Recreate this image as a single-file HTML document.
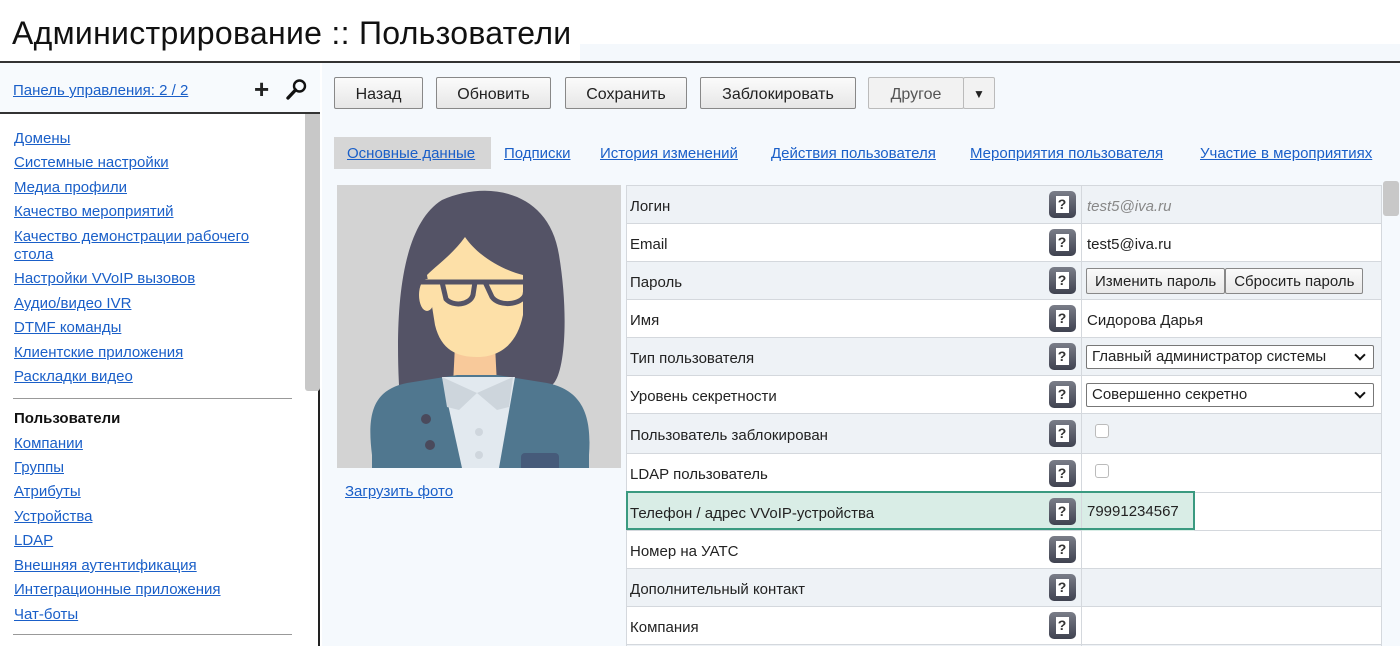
<!DOCTYPE html>
<html style="overflow:hidden;height:646px"><head><meta charset="utf-8"><style>
*{margin:0;padding:0;box-sizing:border-box}
body{width:1400px;height:646px;overflow:hidden;background:#fff;font-family:"Liberation Sans",sans-serif;position:relative;color:#222}
a{color:#1a5fc8;text-decoration:underline}
.abs{position:absolute}
#title{left:12px;top:15px;font-size:32px;color:#111;letter-spacing:0.3px}
#topline{left:0;top:61px;width:1400px;height:2px;background:#333}
#strip{left:580px;top:44px;width:820px;height:17px;background:#f4f8fc}
#side{left:0;top:63px;width:320px;height:583px;background:#fff;border-right:2px solid #222}
#sidehead{left:0;top:63px;width:320px;height:51px;border-bottom:2px solid #333;background:#f7fafd}
.sl{position:absolute;left:14px;font-size:15px;white-space:nowrap}
#main{left:322px;top:63px;width:1078px;height:583px;background:#f5f9fd}
.btn{position:absolute;top:77px;height:32px;border:1px solid #888;border-radius:2px;background:linear-gradient(#fbfbfb,#e6e6e6);font-size:16px;text-align:center;line-height:33px;color:#222}
.tab{position:absolute;top:145px;font-size:15px}
#wrap{position:absolute;left:626px;top:185px;width:756px;height:461px;overflow:hidden}
table{width:756px;border-collapse:collapse;font-size:15px}
td{border:1px solid #d4d8dd;height:38px;padding-left:3px;padding-top:3px}
tr:nth-child(odd) td{background:#eef2f6}
tr:nth-child(even) td{background:#fff}
td.q{width:40px;border-left:none;border-right:1px solid #d4d8dd;text-align:left;padding:0}
td.l{border-right:none}
.qi{display:inline-block;width:27px;height:27px;border-radius:5px;background:linear-gradient(#7a7d88,#3f4250);position:relative;vertical-align:middle;margin-left:7px}
.qi:after{content:"?";position:absolute;left:7px;top:5px;width:13px;height:17px;background:#fff;color:#333;font-size:14px;font-weight:bold;line-height:17px;text-align:center}
td.v{width:300px;padding-left:5px}
.sel{display:block;width:288px;height:24px;border:1px solid #777;border-radius:2px;background:#fff;font-size:15px;line-height:22px;padding-left:5px;position:relative}
.sel:after{content:"";position:absolute;right:9px;top:5px;width:6px;height:6px;border-right:2px solid #111;border-bottom:2px solid #111;transform:rotate(45deg)}
.pb{display:inline-block;height:26px;border:1px solid #888;border-radius:2px;background:linear-gradient(#fafafa,#e8e8e8);font-size:15px;line-height:25px;padding:0 8px}
.cb{display:inline-block;width:14px;height:14px;border:1px solid #bbb;border-radius:3px;background:#fff;margin-left:8px;vertical-align:middle}
</style></head><body>
<div class="abs" id="strip"></div>
<div class="abs" id="title">Администрирование :: Пользователи</div>
<div class="abs" id="topline"></div>
<div class="abs" id="side"></div>
<div class="abs" id="sidehead"></div>
<a class="sl" style="top:82px;left:13px">Панель управления: 2 / 2</a>
<div class="abs" style="left:254px;top:80px;font-size:26px;font-weight:bold;line-height:18px">+</div>
<svg class="abs" style="left:286px;top:78px" width="22" height="22" viewBox="0 0 22 22"><circle cx="13.5" cy="8" r="5.5" fill="none" stroke="#111" stroke-width="2.4"/><line x1="9.5" y1="12" x2="2" y2="20" stroke="#111" stroke-width="3.4" stroke-linecap="round"/></svg>
<div class="abs" style="left:305px;top:114px;width:15px;height:277px;background:#c8c8c8;border-radius:0 0 3px 3px"></div>
<a class="sl" style="top:130px">Домены</a>
<a class="sl" style="top:154px">Системные настройки</a>
<a class="sl" style="top:179px">Медиа профили</a>
<a class="sl" style="top:203px">Качество мероприятий</a>
<a class="sl" style="top:228px">Качество демонстрации рабочего</a>
<a class="sl" style="top:246px">стола</a>
<a class="sl" style="top:270px">Настройки VVoIP вызовов</a>
<a class="sl" style="top:295px">Аудио/видео IVR</a>
<a class="sl" style="top:319px">DTMF команды</a>
<a class="sl" style="top:344px">Клиентские приложения</a>
<a class="sl" style="top:368px">Раскладки видео</a>
<div class="abs" style="left:13px;top:398px;width:279px;height:1px;background:#999"></div>
<div class="sl" style="top:410px;font-weight:bold;color:#111">Пользователи</div>
<a class="sl" style="top:435px">Компании</a>
<a class="sl" style="top:459px">Группы</a>
<a class="sl" style="top:483px">Атрибуты</a>
<a class="sl" style="top:508px">Устройства</a>
<a class="sl" style="top:532px">LDAP</a>
<a class="sl" style="top:557px">Внешняя аутентификация</a>
<a class="sl" style="top:581px">Интеграционные приложения</a>
<a class="sl" style="top:606px">Чат-боты</a>
<div class="abs" style="left:13px;top:634px;width:279px;height:1px;background:#999"></div>

<div class="abs" id="main"></div>
<div class="btn" style="left:334px;width:89px">Назад</div>
<div class="btn" style="left:436px;width:115px">Обновить</div>
<div class="btn" style="left:565px;width:122px">Сохранить</div>
<div class="btn" style="left:700px;width:156px">Заблокировать</div>
<div class="btn" style="left:868px;width:96px;border-color:#bbb;color:#555;background:#f2f2f2">Другое</div>
<div class="btn" style="left:963px;width:32px;border-color:#bbb;background:#f2f2f2;font-size:12px">▼</div>
<div class="abs" style="left:334px;top:137px;width:157px;height:32px;background:#d6d6d6"></div>
<a class="tab" style="left:347px">Основные данные</a>
<a class="tab" style="left:504px">Подписки</a>
<a class="tab" style="left:600px">История изменений</a>
<a class="tab" style="left:771px">Действия пользователя</a>
<a class="tab" style="left:970px">Мероприятия пользователя</a>
<a class="tab" style="left:1200px">Участие в мероприятиях</a>

<svg class="abs" style="left:337px;top:185px" width="284" height="283" viewBox="0 0 284 283">
<rect width="284" height="283" fill="#d3d3d3"/>
<path d="M62 200 C58 120 65 40 105 15 C150 -5 212 5 222 70 C232 130 228 190 215 200 Z" fill="#545366"/>
<path d="M118 160 L158 160 L160 200 L116 200 Z" fill="#f8c99a"/>
<path d="M98 140 C104 165 120 172 140 172 C162 172 180 160 186 130 L186 90 C165 85 140 70 128 52 C115 70 100 80 90 90 Z" fill="#fde0a8"/>
<ellipse cx="90" cy="110" rx="8" ry="16" fill="#fde0a8"/>
<path d="M35 270 C30 230 35 205 70 198 L120 190 L160 190 L210 198 C245 205 255 230 252 270 L252 283 L35 283 Z" fill="#50778f"/>
<path d="M105 192 L178 192 L162 283 L125 283 Z" fill="#e2e9ef"/>
<path d="M105 192 L140 208 L176 192 L172 222 L160 225 L140 208 L122 225 L110 222 Z" fill="#cdd5dc"/>
<circle cx="89" cy="234" r="5" fill="#4a4a5c"/><circle cx="93" cy="260" r="5" fill="#4a4a5c"/>
<circle cx="142" cy="247" r="4" fill="#cfd6dd"/><circle cx="142" cy="270" r="4" fill="#cfd6dd"/>
<rect x="184" y="268" width="38" height="18" rx="4" fill="#465b7a"/>
<path d="M84 97 L196 97" stroke="#545366" stroke-width="5"/>
<path d="M105 97 L138 97 L136 110 C133 120 116 122 109 114 Z" fill="none" stroke="#545366" stroke-width="5" stroke-linejoin="round"/>
<path d="M148 97 L190 97 L188 110 C184 120 162 122 155 112 Z" fill="none" stroke="#545366" stroke-width="5" stroke-linejoin="round"/>
</svg>
<a class="abs" style="left:345px;top:483px;font-size:15px">Загрузить фото</a>

<div id="wrap"><table>
<tr><td class="l">Логин</td><td class="q"><span class="qi"></span></td><td class="v" style="color:#888;font-style:italic">test5@iva.ru</td></tr>
<tr><td class="l">Email</td><td class="q"><span class="qi"></span></td><td class="v">test5@iva.ru</td></tr>
<tr><td class="l">Пароль</td><td class="q"><span class="qi"></span></td><td class="v" style="padding-left:4px;padding-top:0"><span class="pb">Изменить пароль</span><span class="pb">Сбросить пароль</span></td></tr>
<tr><td class="l">Имя</td><td class="q"><span class="qi"></span></td><td class="v">Сидорова Дарья</td></tr>
<tr><td class="l">Тип пользователя</td><td class="q"><span class="qi"></span></td><td class="v" style="padding-left:4px;padding-top:0"><span class="sel">Главный администратор системы</span></td></tr>
<tr><td class="l">Уровень секретности</td><td class="q"><span class="qi"></span></td><td class="v" style="padding-left:4px;padding-top:0"><span class="sel">Совершенно секретно</span></td></tr>
<tr><td class="l" style="height:40px">Пользователь заблокирован</td><td class="q"><span class="qi"></span></td><td class="v" style="vertical-align:top;padding-top:8px"><span class="cb"></span></td></tr>
<tr><td class="l" style="height:39px">LDAP пользователь</td><td class="q"><span class="qi"></span></td><td class="v" style="vertical-align:top;padding-top:8px"><span class="cb"></span></td></tr>
<tr><td class="l" style="background:#d9ede6">Телефон / адрес VVoIP-устройства</td><td class="q" style="background:#d9ede6"><span class="qi"></span></td><td class="v" style="background:#fff;position:relative"><div style="position:absolute;left:0;top:0;width:112px;height:38px;background:#d9ede6;padding-left:5px;line-height:38px">79991234567</div></td></tr>
<tr><td class="l">Номер на УАТС</td><td class="q"><span class="qi"></span></td><td class="v"></td></tr>
<tr><td class="l">Дополнительный контакт</td><td class="q"><span class="qi"></span></td><td class="v"></td></tr>
<tr><td class="l">Компания</td><td class="q"><span class="qi"></span></td><td class="v"></td></tr>
<tr><td class="l"></td><td class="q"></td><td class="v"></td></tr>
</table></div>
<div class="abs" style="left:626px;top:491px;width:569px;height:39px;border:2px solid #3a9a80"></div>
<div class="abs" style="left:1383px;top:181px;width:16px;height:35px;background:#c8c8c8;border-radius:3px"></div>
</body></html>
